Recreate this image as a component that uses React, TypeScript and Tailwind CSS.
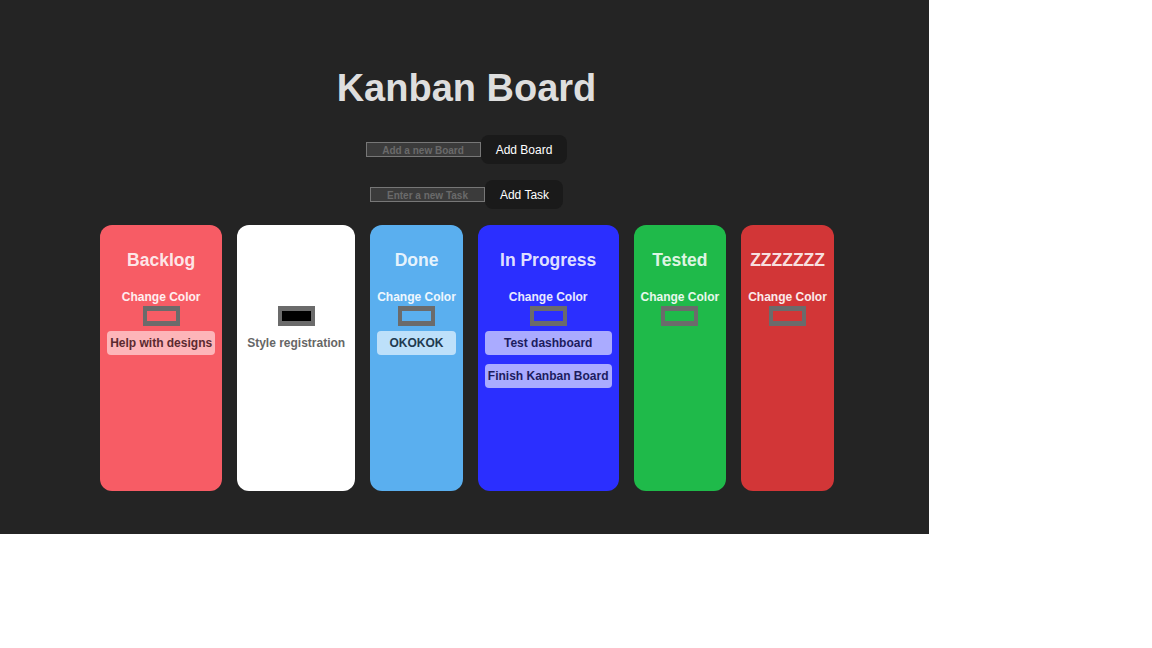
import React, { useState } from 'react';

type Board = {
  id: number;
  title: string;
  bg: string;
  swatch: string;
  taskBg: string;
  taskText: string;
  tasks: string[];
};

const boards: Board[] = [
  { id: 1, title: 'Backlog', bg: 'bg-[#f75c65]', swatch: 'bg-[#f75c65]', taskBg: 'bg-[#fdb5b9]', taskText: 'text-[#5a2a30]', tasks: ['Help with designs'] },
  { id: 2, title: '', bg: 'bg-white', swatch: 'bg-black', taskBg: 'bg-white', taskText: 'text-[#666666]', tasks: ['Style registration'] },
  { id: 3, title: 'Done', bg: 'bg-[#5aafef]', swatch: 'bg-[#5aafef]', taskBg: 'bg-[#bde0fa]', taskText: 'text-[#1f3a50]', tasks: ['OKOKOK'] },
  { id: 4, title: 'In Progress', bg: 'bg-[#2b2fff]', swatch: 'bg-[#2b2fff]', taskBg: 'bg-[#aaabff]', taskText: 'text-[#1c1c5e]', tasks: ['Test dashboard', 'Finish Kanban Board'] },
  { id: 5, title: 'Tested', bg: 'bg-[#1fba4a]', swatch: 'bg-[#1fba4a]', taskBg: 'bg-[#a5e3b7]', taskText: 'text-[#1c4a2a]', tasks: [] },
  { id: 6, title: 'ZZZZZZZ', bg: 'bg-[#d23637]', swatch: 'bg-[#d23637]', taskBg: 'bg-[#e99a9b]', taskText: 'text-[#5a2020]', tasks: [] },
];

const BoardColumn: React.FC<{ board: Board }> = ({ board }) => (
  <div className={`${board.bg} rounded-xl h-[266px] px-[7px] pt-[25px] flex flex-col items-center`}>
    <h2 className="h-[20px] leading-[20px] text-[17.5px] font-bold text-white/[0.87]">{board.title}</h2>
    <p className="mt-[20px] leading-[14px] text-[12px] font-bold text-white/[0.9]">Change Color</p>
    <div className={`mt-[2px] w-[37px] h-[20px] border-x-4 border-y-[5px] border-[#6b6b6b] ${board.swatch}`} />
    <div className="mt-[5px] flex flex-col gap-[9px] self-stretch">
      {board.tasks.map((t) => (
        <div
          key={t}
          className={`${board.taskBg} ${board.taskText} rounded-[4px] px-[3px] py-[5px] leading-[14px] text-[12px] font-bold text-center whitespace-nowrap`}
        >
          {t}
        </div>
      ))}
    </div>
  </div>
);

export default function App() {
  const [boardName, setBoardName] = useState('');
  const [taskName, setTaskName] = useState('');

  return (
    <div className="w-[929px] h-[534px] bg-[#242424] flex flex-col items-center font-['Liberation_Sans',Arial,sans-serif]">
      <h1 className="mt-[65px] ml-[4px] text-[38px] leading-[46px] font-bold text-[#dedede]">Kanban Board</h1>

      <div className="mt-[24px] ml-[3px] flex items-center">
        <input
          value={boardName}
          onChange={(e) => setBoardName(e.target.value)}
          placeholder="Add a new Board"
          className="w-[115px] h-[15px] bg-[#3b3b3b] border border-[#777777] text-[10px] font-bold text-center text-[#cccccc] placeholder:text-[#6a6a6a] outline-none pt-px"
        />
        <button className="h-[29px] w-[86px] rounded-lg bg-[#1a1a1a] text-white text-[12px] pl-px">Add Board</button>
      </div>

      <div className="mt-[16px] ml-[4px] flex items-center">
        <input
          value={taskName}
          onChange={(e) => setTaskName(e.target.value)}
          placeholder="Enter a new Task"
          className="w-[115px] h-[15px] bg-[#3b3b3b] border border-[#777777] text-[10px] font-bold text-center text-[#cccccc] placeholder:text-[#6a6a6a] outline-none pt-px"
        />
        <button className="h-[29px] w-[78px] rounded-lg bg-[#1a1a1a] text-white text-[12px] pl-px">Add Task</button>
      </div>

      <div className="mt-[16px] ml-[5px] flex items-start gap-[15px]">
        {boards.map((b) => (
          <BoardColumn key={b.id} board={b} />
        ))}
      </div>
    </div>
  );
}
